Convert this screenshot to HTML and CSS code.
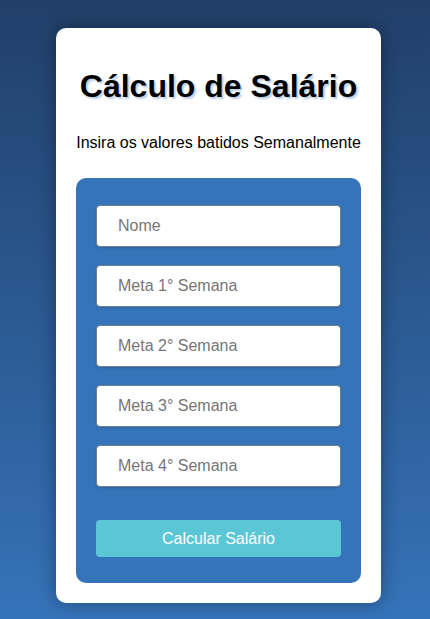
FILE: index.html
```html
<!DOCTYPE html>
<html lang="pt">
<head>
<meta charset="utf-8">
<title>Cálculo de Salário</title>
<link rel="stylesheet" href="styles.css">
</head>
<body>
<div class="card">
  <h1 class="title">Cálculo de Salário</h1>
  <p class="subtitle">Insira os valores batidos Semanalmente</p>
  <form class="panel">
    <input class="field" type="text" placeholder="Nome">
    <input class="field" type="text" placeholder="Meta 1° Semana">
    <input class="field" type="text" placeholder="Meta 2° Semana">
    <input class="field" type="text" placeholder="Meta 3° Semana">
    <input class="field" type="text" placeholder="Meta 4° Semana">
    <button class="btn" type="button">Calcular Salário</button>
  </form>
</div>
</body>
</html>
```
FILE: styles.css
```css
html, body {
  margin: 0;
  height: 100%;
}
body {
  background: linear-gradient(to bottom, #213f69 0%, #3573b9 100%);
  font-family: "Liberation Sans", Arial, sans-serif;
  padding-top: 28px;
  box-sizing: border-box;
  overflow: hidden;
}
.card {
  width: 325px;
  margin-left: 56px;
  background: #fff;
  border-radius: 10px;
  box-shadow: 0 0 18px rgba(0, 0, 0, 0.35);
  padding: 40px 20px 20px;
  box-sizing: border-box;
}
.title {
  margin: 0;
  text-align: center;
  font-size: 32px;
  font-weight: bold;
  line-height: 37px;
  color: #000;
  text-shadow: 2px 2px 2px #b9cfe4;
}
.subtitle {
  margin: 29px 0 0;
  text-align: center;
  font-size: 16px;
  line-height: 18px;
  color: #000;
}
.panel {
  margin-top: 26px;
  background: #3674b9;
  border-radius: 10px;
  padding: 27px 20px 26px;
  display: flex;
  flex-direction: column;
  gap: 18px;
}
.field {
  display: block;
  width: 100%;
  height: 42px;
  box-sizing: border-box;
  border: 1px solid #6c7f94;
  border-radius: 4px;
  padding: 0 21px;
  font-family: "Liberation Sans", Arial, sans-serif;
  font-size: 16px;
  color: #333;
  background: #fff;
  box-shadow: 0 1px 2px rgba(0, 0, 0, 0.15);
}
.field::placeholder {
  color: #767676;
}
.btn {
  margin-top: 15px;
  height: 37px;
  border: none;
  border-radius: 4px;
  background: #5bc7d6;
  color: #fff;
  font-family: "Liberation Sans", Arial, sans-serif;
  font-size: 16px;
}
```
